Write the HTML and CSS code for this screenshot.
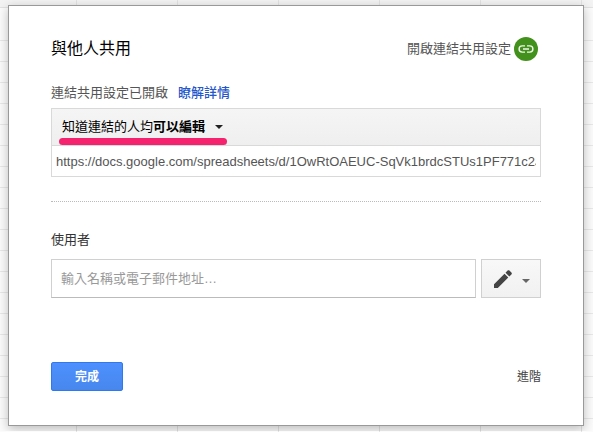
FILE: index.html
```html
<!DOCTYPE html>
<html lang="zh-Hant">
<head>
  <meta charset="UTF-8" />
  <meta name="viewport" content="width=device-width, initial-scale=1" />
  <title>與他人共用</title>
  <link rel="stylesheet" href="styles.css">
</head>
<body>
  <main class="dialog">
    <div class="header">
      <h1>與他人共用</h1>
      <button type="button" class="link-toggle">
        開啟連結共用設定
        <svg width="24" height="24" viewBox="0 0 24 24" aria-hidden="true">
          <circle cx="12" cy="12" r="12" fill="#42911c" />
          <path d="M11 8.9H8.2a3.1 3.1 0 0 0 0 6.2H11M13 8.9h2.8a3.1 3.1 0 0 1 0 6.2H13M9 12h6" fill="none" stroke="#f1f8ec" stroke-width="1.4" />
        </svg>
      </button>
    </div>

    <div class="status">
      <span>連結共用設定已開啟</span>
      <a href="#">瞭解詳情</a>
    </div>

    <div class="link-box">
      <div class="access">
        <label for="access">知道連結的人均</label>
        <select id="access" class="access-select">
          <option>可以編輯</option>
        </select>
        <svg class="arrow" width="8" height="4" viewBox="0 0 8 4" aria-hidden="true"><path d="M0 0h8L4 4z" fill="#222" /></svg>
        <span class="marker"></span>
      </div>
      <input type="text" class="url" aria-label="連結" readonly value="https://docs.google.com/spreadsheets/d/1OwRtOAEUC-SqVk1brdcSTUs1PF771c2J" />
    </div>

    <hr class="divider" />

    <label class="users-label" for="users">使用者</label>
    <div class="users">
      <input type="text" id="users" class="users-input" placeholder="輸入名稱或電子郵件地址…" />
      <button type="button" class="role" aria-label="可以編輯" aria-haspopup="true">
        <svg width="20" height="20" viewBox="0 0 20 20" aria-hidden="true">
          <path d="M1 15.2V19h3.8L15.3 8.5l-3.8-3.8zM16.3 7.5l2.1-2.1c.6-.6.6-1.2 0-1.8l-2-2c-.6-.6-1.2-.6-1.8 0l-2.1 2.1z" fill="#444" />
        </svg>
        <svg class="role-arrow" width="8" height="4" viewBox="0 0 8 4" aria-hidden="true"><path d="M0 0h8L4 4z" fill="#666" /></svg>
      </button>
    </div>

    <div class="footer">
      <button type="button" class="btn">完成</button>
      <a href="#" class="advanced">進階</a>
    </div>
  </main>
</body>
</html>
```

FILE: styles.css
```css
* {
  box-sizing: border-box;
}
body {
  margin: 0;
  padding: 5px 9px 5px 8px;
  font-family: "Liberation Sans", "Noto Sans CJK TC", sans-serif;
  font-size: 13px;
  line-height: 20px;
  color: #555;
  /* spreadsheet cells behind the dialog, with the column header strip on top */
  background-color: #fbfbfb;
  background-image:
    linear-gradient(90deg, #e2e2e2 1px, transparent 1px),
    linear-gradient(#f3f3f3 7px, #e2e2e2 7px, #e2e2e2 8px, #fbfbfb 8px),
    linear-gradient(#e8e8e8 1px, transparent 1px);
  background-size: 101px 101px, 100% 30px, 100% 21px;
  background-position: 76px 0, 0 0, 0 19px;
  background-repeat: repeat, no-repeat, repeat;
}
button,
input,
select {
  font: inherit;
  color: inherit;
}
a {
  text-decoration: none;
}
.dialog {
  padding: 30px 42px 34px;
  background: #fff;
  border: 1px solid #999;
  box-shadow: 0 3px 10px rgba(0, 0, 0, 0.25);
}
.header {
  display: flex;
  align-items: center;
  justify-content: space-between;
  margin-bottom: 22px;
}
h1 {
  margin: 0;
  font-size: 16px;
  font-weight: normal;
  line-height: 24px;
  color: #000;
}
.link-toggle {
  display: flex;
  align-items: center;
  gap: 3px;
  padding: 1px 3px 0 0;
  border: none;
  background: none;
}
.status {
  display: flex;
  gap: 10px;
  margin-bottom: 5px;
}
.status a {
  font-weight: 500;
  color: #2456cc;
}
.link-box {
  border: 1px solid #d9d9d9;
}
.access {
  position: relative;
  display: flex;
  align-items: center;
  height: 37px;
  padding-left: 10px;
  color: #000;
  background: linear-gradient(#f5f5f5, #efefef);
  border-bottom: 1px solid #d9d9d9;
}
.access-select {
  appearance: none;
  padding: 0 18px 0 0;
  border: none;
  background: none;
  font-weight: bold;
}
.arrow {
  margin-left: -9px;
  pointer-events: none;
}
.marker {
  position: absolute;
  left: 7px;
  bottom: 0;
  width: 168px;
  height: 7px;
  border-radius: 4px;
  background: #f5226e;
}
.url {
  display: block;
  width: 100%;
  height: 30px;
  padding: 0 4px;
  border: none;
}
.divider {
  margin: 24px 0 28px;
  border: none;
  border-top: 1px dotted #bbb;
}
.users-label {
  display: block;
  margin-bottom: 9px;
  color: #333;
}
.users {
  display: flex;
  gap: 5px;
  margin-bottom: 64px;
}
.users-input {
  flex: 1;
  min-width: 0;
  height: 39px;
  padding: 0 9px;
  border: 1px solid #d0d0d0;
  border-bottom-color: #bbb;
}
.users-input::placeholder {
  color: #999;
}
.role {
  display: flex;
  align-items: center;
  justify-content: center;
  gap: 9px;
  width: 60px;
  padding: 0;
  border: 1px solid #d0d0d0;
  background: linear-gradient(#f8f8f8, #f1f1f1);
}
.role-arrow {
  margin-top: 4px;
}
.footer {
  display: flex;
  align-items: center;
  justify-content: space-between;
  font-size: 12px;
}
.btn {
  width: 72px;
  height: 29px;
  padding: 0;
  border: 1px solid #3079ed;
  border-radius: 2px;
  background: linear-gradient(#4d90fe, #4787ed);
  font-weight: bold;
  color: #fff;
}
.advanced {
  color: #444;
}
```
